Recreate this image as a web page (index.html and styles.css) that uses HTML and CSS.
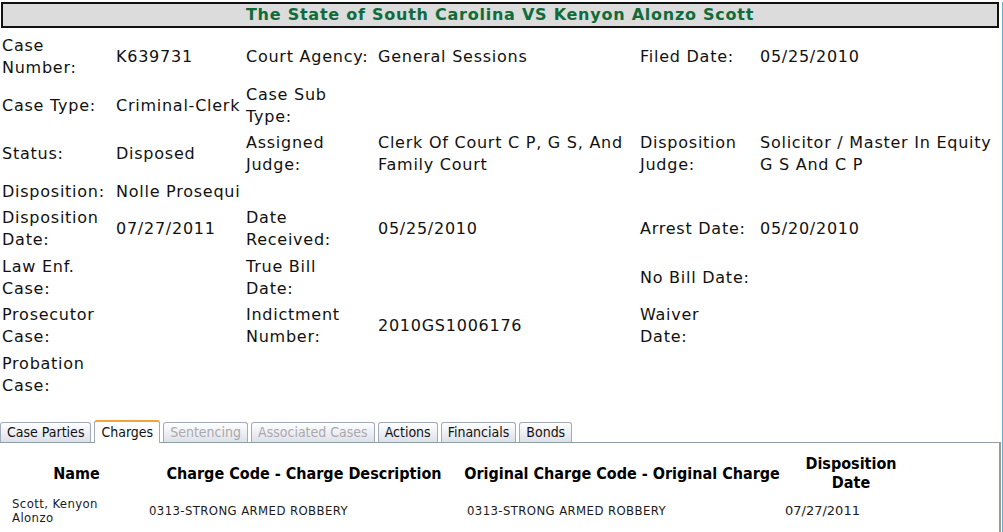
FILE: index.html
```html
<!DOCTYPE html>
<html lang="en">
<head>
    <meta charset="UTF-8">
    <title>Case Details</title>
    <link rel="stylesheet" href="styles.css">
</head>
<body>
<div class="page">
    <h1 class="case-title">The State of South Carolina VS Kenyon Alonzo Scott</h1>
    <table class="case-info">
        <colgroup>
            <col class="c-label1"><col class="c-value1">
            <col class="c-label2"><col class="c-value2">
            <col class="c-label3"><col class="c-value3">
        </colgroup>
        <tr>
            <td>Case Number:</td><td>K639731</td>
            <td>Court Agency:</td><td>General Sessions</td>
            <td>Filed Date:</td><td>05/25/2010</td>
        </tr>
        <tr>
            <td>Case Type:</td><td>Criminal-Clerk</td>
            <td>Case Sub Type:</td><td></td>
            <td></td><td></td>
        </tr>
        <tr>
            <td>Status:</td><td>Disposed</td>
            <td>Assigned Judge:</td><td>Clerk Of Court C P, G S, And Family Court</td>
            <td>Disposition Judge:</td><td>Solicitor / Master In Equity G S And C P</td>
        </tr>
        <tr>
            <td>Disposition:</td><td>Nolle Prosequi</td>
            <td></td><td></td>
            <td></td><td></td>
        </tr>
        <tr>
            <td>Disposition Date:</td><td>07/27/2011</td>
            <td>Date Received:</td><td>05/25/2010</td>
            <td>Arrest Date:</td><td>05/20/2010</td>
        </tr>
        <tr>
            <td>Law Enf. Case:</td><td></td>
            <td>True Bill<br>Date:</td><td></td>
            <td>No Bill Date:</td><td></td>
        </tr>
        <tr>
            <td>Prosecutor Case:</td><td></td>
            <td>Indictment Number:</td><td>2010GS1006176</td>
            <td>Waiver<br>Date:</td><td></td>
        </tr>
        <tr>
            <td>Probation Case:</td><td></td>
            <td></td><td></td>
            <td></td><td></td>
        </tr>
    </table>

    <ul class="tabs">
        <li class="tab">Case Parties</li>
        <li class="tab selected">Charges</li>
        <li class="tab disabled">Sentencing</li>
        <li class="tab disabled">Associated Cases</li>
        <li class="tab">Actions</li>
        <li class="tab">Financials</li>
        <li class="tab">Bonds</li>
    </ul>
    <div class="tab-panel">
        <table class="charges">
            <colgroup>
                <col class="c-name"><col class="c-code"><col class="c-orig"><col class="c-date">
            </colgroup>
            <tr>
                <th>Name</th>
                <th>Charge Code - Charge Description</th>
                <th>Original Charge Code - Original Charge</th>
                <th class="date-head">Disposition Date</th>
            </tr>
            <tr>
                <td>Scott, Kenyon Alonzo</td>
                <td>0313-STRONG ARMED ROBBERY</td>
                <td>0313-STRONG ARMED ROBBERY</td>
                <td class="date">07/27/2011</td>
            </tr>
        </table>
    </div>
</div>
</body>
</html>
```

FILE: styles.css
```css
/*reset*/
body,h1,ul,li,table,td,th{
    padding: 0;
    margin: 0;
}
/*public*/
body{
    font-family: "DejaVu Sans", Verdana, sans-serif;
    color: #111;
    background: #fff;
}
.page{
    width: 1002px;
    min-height: 532px;
    border-right: 1px solid #5db3cf;
}
.case-title{
    margin: 2px 3px 0 1px;
    height: 22px;
    line-height: 22px;
    border: 2px solid #111;
    background: #dcdcdc;
    color: #0f6b3a;
    font-size: 16px;
    font-weight: bold;
    letter-spacing: 0.75px;
    text-align: center;
}
.case-info{
    margin-top: 5px;
    width: 1002px;
    border-spacing: 0;
    table-layout: fixed;
    font-size: 16px;
    line-height: 22px;
    letter-spacing: 0.75px;
}
.case-info td{
    padding: 2px 2px 2.5px;
    vertical-align: middle;
}
.c-label1{ width: 114px; }
.c-value1{ width: 130px; }
.c-label2{ width: 132px; }
.c-value2{ width: 262px; }
.c-label3{ width: 120px; }
.c-value3{ width: 244px; }

.tabs{
    list-style: none;
    display: flex;
    align-items: flex-end;
    gap: 3px;
    margin-top: 21px;
    height: 23px;
    position: relative;
    z-index: 1;
}
.tab{
    height: 19px;
    line-height: 18px;
    padding: 0 6px;
    margin-bottom: 1px;
    border: 1px solid #a3abba;
    border-bottom: none;
    border-radius: 3px 3px 0 0;
    background: linear-gradient(#ffffff, #dde0e9);
    font-family: "DejaVu Sans Condensed", "DejaVu Sans", sans-serif;
    font-size: 14px;
    color: #111;
}
.tab.selected{
    height: 21px;
    line-height: 21px;
    margin-bottom: 0;
    border-top: 2px solid #f2a33a;
    background: #fff;
}
.tab.disabled{
    color: #a9a9a9;
}
.tab-panel{
    margin-top: -1px;
    margin-right: 1px;
    height: 89px;
    border-top: 1px solid #8f9ea3;
    border-right: 2px solid #9a9a9a;
}
.charges{
    margin: 8px 0 0 8px;
    border-spacing: 0;
    table-layout: fixed;
    width: 913px;
}
.c-name{ width: 137px; }
.c-code{ width: 318px; }
.c-orig{ width: 318px; }
.c-date{ width: 140px; }
.charges th{
    padding: 3px 0;
    font-family: "DejaVu Sans Condensed", "DejaVu Sans", sans-serif;
    font-size: 16px;
    line-height: 19px;
    font-weight: bold;
    text-align: center;
    vertical-align: middle;
    color: #000;
}
.charges th.date-head{
    padding: 3px 8px;
}
.charges td{
    padding: 2px 4px;
    font-family: "DejaVu Sans Condensed", "DejaVu Sans", sans-serif;
    font-size: 13px;
    line-height: 14px;
    letter-spacing: 0.4px;
    text-align: left;
    vertical-align: middle;
    color: #1a1a1a;
}
.charges td.date{
    font-family: "DejaVu Sans", sans-serif;
    letter-spacing: 0;
}
```
